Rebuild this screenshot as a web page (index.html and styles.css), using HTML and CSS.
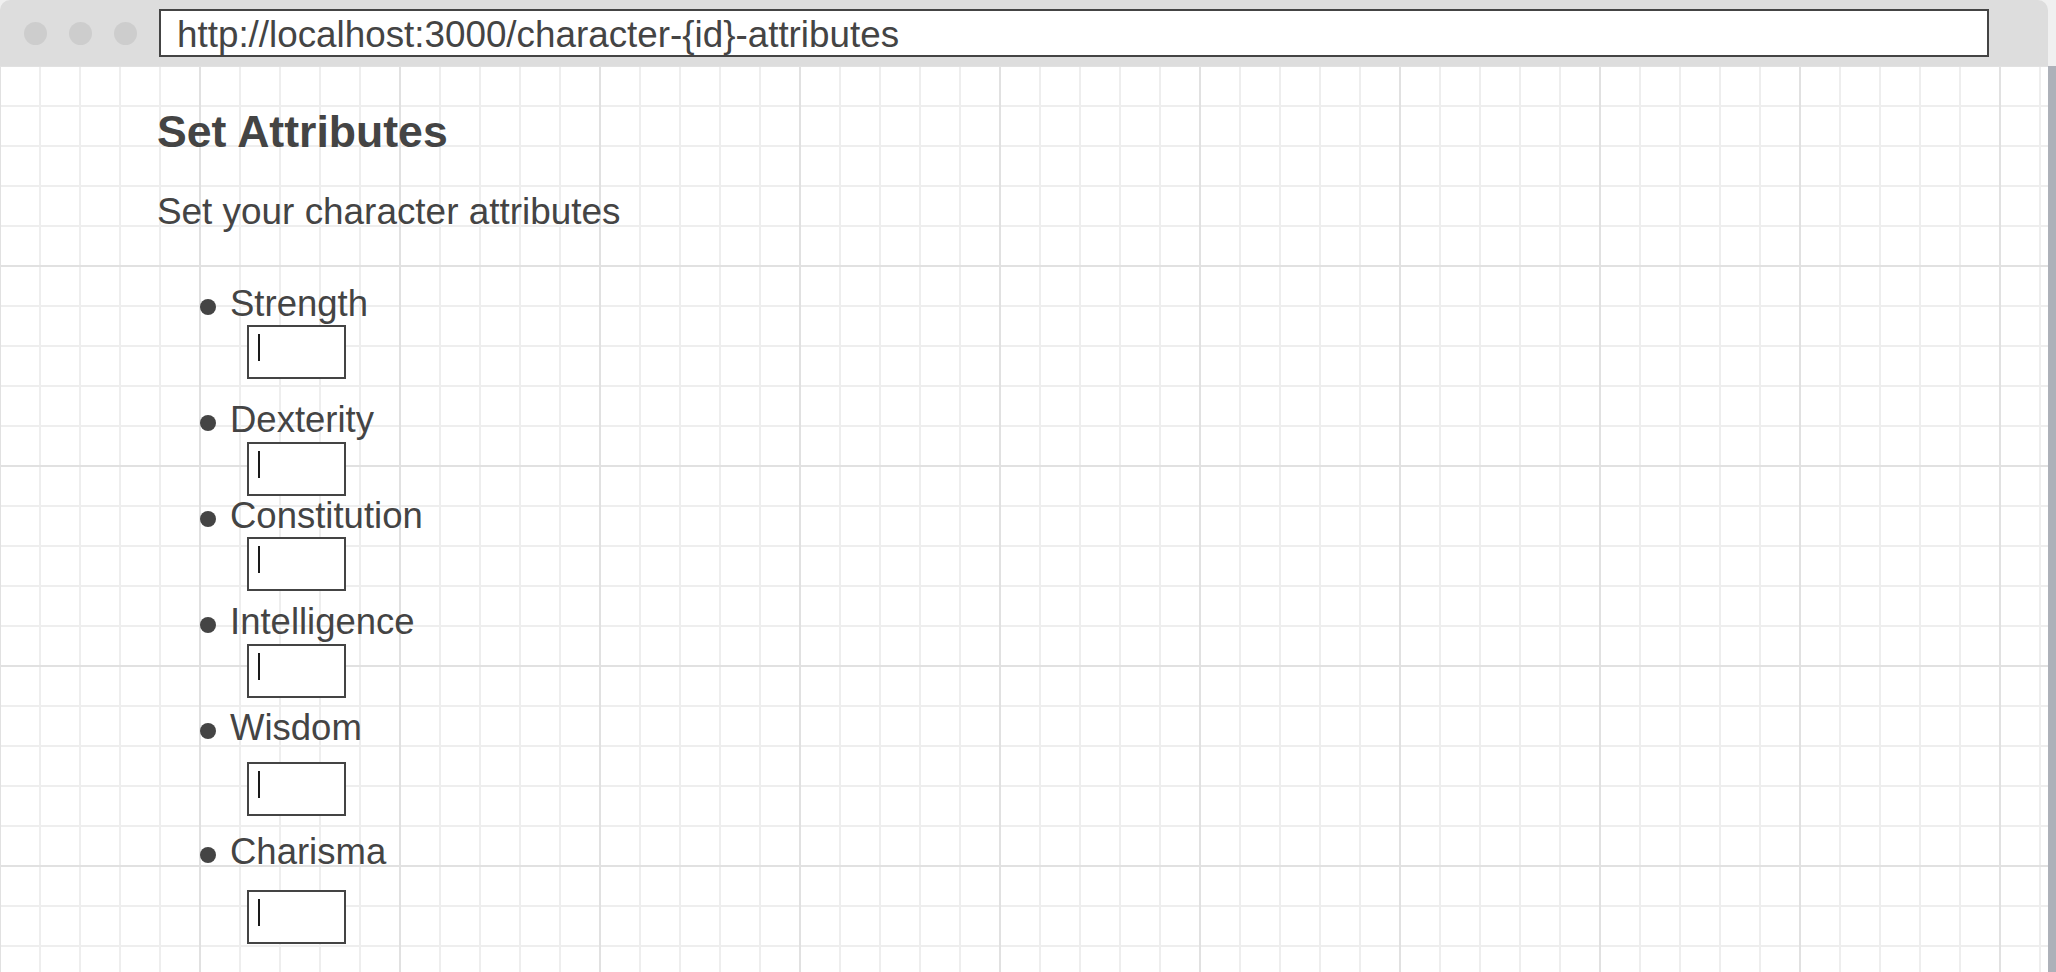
FILE: index.html
```html
<!DOCTYPE html>
<html lang="en">
<head>
<meta charset="utf-8">
<title>Set Attributes</title>
<link rel="stylesheet" href="styles.css">
</head>
<body>
<div class="window">
  <header class="titlebar">
    <div class="dots">
      <span class="dot"></span>
      <span class="dot"></span>
      <span class="dot"></span>
    </div>
    <div class="address">http://localhost:3000/character-{id}-attributes</div>
  </header>
  <main class="viewport">
    <h1 class="title">Set Attributes</h1>
    <p class="subtitle">Set your character attributes</p>
    <ul class="attrs">
      <li class="attr attr--str">
        <div class="attr-label"><span class="bullet"></span><span class="attr-name">Strength</span></div>
        <div class="field"><span class="caret"></span></div>
      </li>
      <li class="attr attr--dex">
        <div class="attr-label"><span class="bullet"></span><span class="attr-name">Dexterity</span></div>
        <div class="field"><span class="caret"></span></div>
      </li>
      <li class="attr attr--con">
        <div class="attr-label"><span class="bullet"></span><span class="attr-name">Constitution</span></div>
        <div class="field"><span class="caret"></span></div>
      </li>
      <li class="attr attr--int">
        <div class="attr-label"><span class="bullet"></span><span class="attr-name">Intelligence</span></div>
        <div class="field"><span class="caret"></span></div>
      </li>
      <li class="attr attr--wis">
        <div class="attr-label"><span class="bullet"></span><span class="attr-name">Wisdom</span></div>
        <div class="field"><span class="caret"></span></div>
      </li>
      <li class="attr attr--cha">
        <div class="attr-label"><span class="bullet"></span><span class="attr-name">Charisma</span></div>
        <div class="field"><span class="caret"></span></div>
      </li>
    </ul>
  </main>
</div>
<div class="scrollbar">
  <div class="scroll-track"></div>
  <div class="scroll-thumb"></div>
</div>
</body>
</html>
```

FILE: styles.css
```css
html, body {
  margin: 0;
  padding: 0;
  height: 100%;
}

body {
  display: flex;
  flex-direction: row;
  overflow: hidden;
  background: #f0f0f0;
  font-family: "Liberation Sans", Arial, sans-serif;
  color: #444444;
}

.window {
  flex: 1;
  display: flex;
  flex-direction: column;
  min-width: 0;
}

.titlebar {
  flex: 0 0 66px;
  height: 66px;
  box-sizing: border-box;
  background: #dddddd;
  border-radius: 10px 10px 0 0;
  display: flex;
  align-items: center;
  padding: 0 59px 0 24px;
  gap: 22px;
}

.dots {
  display: flex;
  gap: 22px;
}

.dot {
  width: 23px;
  height: 23px;
  border-radius: 50%;
  background: #cdcdcd;
}

.address {
  flex: 1;
  height: 48px;
  box-sizing: border-box;
  border: 2px solid #444444;
  background: #ffffff;
  padding: 4px 16px 0 16px;
  font-size: 36.8px;
  line-height: 40px;
  color: #444444;
  white-space: nowrap;
  overflow: visible;
}

.viewport {
  flex: 1;
  background-color: #ffffff;
  background-image:
    linear-gradient(to right, #e1e1e1 2px, transparent 2px),
    linear-gradient(to bottom, #e1e1e1 2px, transparent 2px),
    linear-gradient(to right, #eeeeee 2px, transparent 2px),
    linear-gradient(to bottom, #eeeeee 2px, transparent 2px);
  background-size: 200px 200px, 200px 200px, 40px 40px, 40px 40px;
  background-position: -1px -1px;
  padding: 40px 0 0 157px;
  overflow: hidden;
}

.title {
  margin: 0;
  font-size: 44.6px;
  line-height: 52px;
  font-weight: 700;
  color: #444444;
}

.subtitle {
  margin: 32px 0 0 0;
  font-size: 36.9px;
  line-height: 44px;
  color: #444444;
}

.attrs {
  list-style: none;
  margin: 50px 0 0 0;
  padding: 0 0 0 43px;
}

.attr {
  display: flex;
  flex-direction: column;
  align-items: flex-start;
}

.attr-label {
  display: flex;
  align-items: flex-start;
  gap: 14px;
  font-size: 36.5px;
  line-height: 40px;
  height: 40px;
  color: #444444;
}

.bullet {
  flex: 0 0 16px;
  width: 16px;
  height: 16px;
  margin-top: 14.5px;
  border-radius: 50%;
  background: #444444;
}

.field {
  width: 99px;
  height: 54px;
  box-sizing: border-box;
  border: 2px solid #444444;
  background: #ffffff;
  margin-left: 47px;
  margin-top: 1px;
  padding: 7px 0 0 9px;
}

.caret {
  display: block;
  width: 2px;
  height: 27px;
  background: #1a1a1a;
}

.attr--dex { margin-top: 21px; }
.attr--dex .field { margin-top: 2px; }

.attr--con { margin-top: 0; }
.attr--con .field { margin-top: 1px; }

.attr--int { margin-top: 11px; }
.attr--int .field { margin-top: 2px; }

.attr--wis { margin-top: 10px; }
.attr--wis .field { margin-top: 14px; }

.attr--cha { margin-top: 16px; }
.attr--cha .field { margin-top: 18px; }

.scrollbar {
  flex: 0 0 8px;
  width: 8px;
  display: flex;
  flex-direction: column;
}

.scroll-track {
  flex: 0 0 66px;
  background: #f0f0f0;
}

.scroll-thumb {
  flex: 1;
  background: #adb1b9;
}
```
